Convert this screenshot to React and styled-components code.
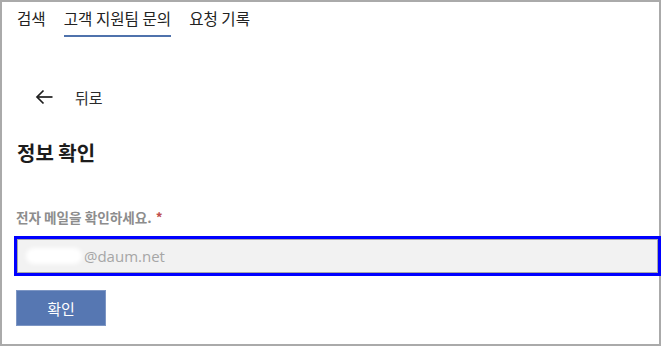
import React from 'react';
import styled, { createGlobalStyle } from 'styled-components';

const GlobalStyle = createGlobalStyle`
  body {
    margin: 0;
    background: #ffffff;
    font-family: "Noto Sans CJK KR", "Noto Sans", sans-serif;
  }
`;

const Frame = styled.div`
  box-sizing: border-box;
  width: 661px;
  height: 346px;
  border: 2px solid #aaaaaa;
  background: #ffffff;
  display: flex;
  flex-direction: column;
  align-items: flex-start;
`;

const Tabs = styled.nav`
  display: flex;
  gap: 18px;
  padding: 6px 0 0 15px;
`;

const Tab = styled.div`
  font-size: 15.6px;
  line-height: 20px;
  color: #222222;
  padding-bottom: 7px;
  border-bottom: 2px solid ${({ $active }) => ($active ? '#4f72ac' : 'transparent')};
`;

const BackRow = styled.div`
  display: flex;
  align-items: center;
  gap: 22px;
  height: 24px;
  margin: 48px 0 0 33px;
  font-size: 15px;
  color: #2a2a2a;
`;

const Title = styled.h1`
  margin: 31px 0 0 15px;
  font-size: 20px;
  line-height: 26px;
  font-weight: 700;
  color: #1c1c1c;
`;

const Label = styled.label`
  margin: 41px 0 0 14px;
  font-size: 13.6px;
  line-height: 20px;
  font-weight: 700;
  color: #8d8d8d;
`;

const Required = styled.span`
  color: #c0504d;
  margin-left: 4px;
`;

const Highlight = styled.div`
  align-self: stretch;
  margin: 9px -2px 0 12px;
  border: 3px solid #0000ff;
`;

const Field = styled.div`
  box-sizing: border-box;
  height: 34px;
  display: flex;
  align-items: center;
  padding-left: 8px;
  background: #f2f2f2;
  border: 1px solid #a8a8a8;
  font-family: "Open Sans", "Noto Sans", sans-serif;
  font-size: 15px;
  color: #a6a6a6;
`;

const Redacted = styled.span`
  display: inline-block;
  width: 56px;
  height: 16px;
  margin-right: 2px;
  background: #ffffff;
  border-radius: 8px;
  filter: blur(2px);
`;

const Button = styled.button`
  box-sizing: border-box;
  margin: 14px 0 0 14px;
  width: 90px;
  height: 36px;
  border: 1px solid #7d96c4;
  background: #5677b2;
  color: #ffffff;
  font-family: "Noto Sans CJK KR", sans-serif;
  font-size: 15px;
  cursor: pointer;
`;

const BackArrow = () => (
  <svg width="18" height="16" viewBox="0 0 18 16" fill="none" stroke="#1e1e1e" strokeWidth="1.7">
    <path d="M17.5 8H2" />
    <path d="M8.5 1.5L2 8l6.5 6.5" />
  </svg>
);

export default function App() {
  return (
    <>
      <GlobalStyle />
      <Frame>
        <Tabs>
          <Tab>검색</Tab>
          <Tab $active>고객 지원팀 문의</Tab>
          <Tab>요청 기록</Tab>
        </Tabs>
        <BackRow>
          <BackArrow />
          <span>뒤로</span>
        </BackRow>
        <Title>정보 확인</Title>
        <Label>
          전자 메일을 확인하세요.<Required>*</Required>
        </Label>
        <Highlight>
          <Field>
            <Redacted />
            @daum.net
          </Field>
        </Highlight>
        <Button>확인</Button>
      </Frame>
    </>
  );
}
